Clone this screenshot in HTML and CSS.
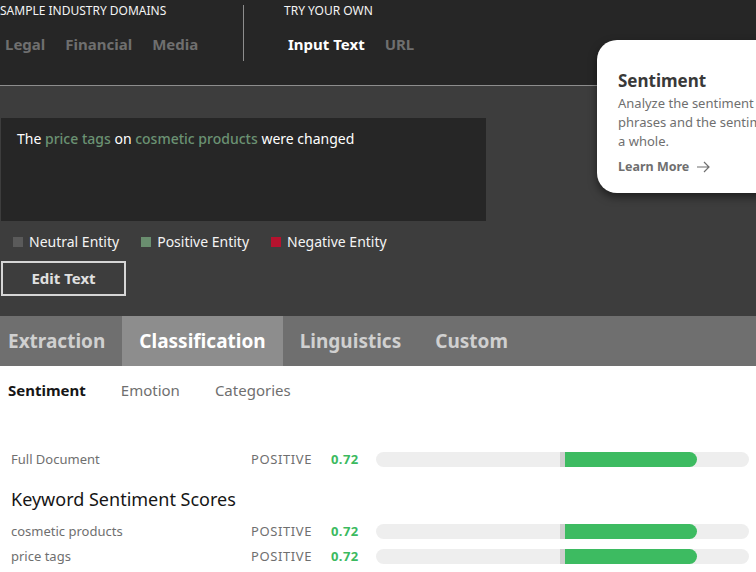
FILE: index.html
```html
<!DOCTYPE html>
<html>
<head>
<meta charset="utf-8">
<link rel="stylesheet" href="styles.css">
</head>
<body>
<div class="page">
  <header class="header">
    <div class="group group-domains">
      <div class="group-label">SAMPLE INDUSTRY DOMAINS</div>
      <div class="links">
        <span class="link">Legal</span>
        <span class="link">Financial</span>
        <span class="link">Media</span>
      </div>
    </div>
    <div class="divider"></div>
    <div class="group group-own">
      <div class="group-label">TRY YOUR OWN</div>
      <div class="links">
        <span class="link active">Input Text</span>
        <span class="link">URL</span>
      </div>
    </div>
  </header>

  <section class="input-area">
    <div class="text-box">The <span class="pos">price tags</span> on <span class="pos">cosmetic products</span> were changed</div>
    <div class="legend">
      <span class="legend-item"><span class="swatch neutral"></span>Neutral Entity</span>
      <span class="legend-item"><span class="swatch positive"></span>Positive Entity</span>
      <span class="legend-item"><span class="swatch negative"></span>Negative Entity</span>
    </div>
    <button class="edit-btn">Edit Text</button>
  </section>

  <nav class="tabs">
    <span class="tab">Extraction</span>
    <span class="tab active">Classification</span>
    <span class="tab">Linguistics</span>
    <span class="tab">Custom</span>
  </nav>

  <section class="results">
    <div class="subtabs">
      <span class="subtab active">Sentiment</span>
      <span class="subtab">Emotion</span>
      <span class="subtab">Categories</span>
    </div>

    <div class="row row-doc">
      <span class="row-label">Full Document</span>
      <span class="row-sent">POSITIVE</span>
      <span class="row-score">0.72</span>
      <div class="bar"><div class="bar-left"></div><div class="bar-mid"></div><div class="bar-right"><div class="bar-fill" style="width:72%"></div></div></div>
    </div>

    <h2 class="kw-title">Keyword Sentiment Scores</h2>

    <div class="row">
      <span class="row-label">cosmetic products</span>
      <span class="row-sent">POSITIVE</span>
      <span class="row-score">0.72</span>
      <div class="bar"><div class="bar-left"></div><div class="bar-mid"></div><div class="bar-right"><div class="bar-fill" style="width:72%"></div></div></div>
    </div>
    <div class="row">
      <span class="row-label">price tags</span>
      <span class="row-sent">POSITIVE</span>
      <span class="row-score">0.72</span>
      <div class="bar"><div class="bar-left"></div><div class="bar-mid"></div><div class="bar-right"><div class="bar-fill" style="width:72%"></div></div></div>
    </div>
  </section>

  <div class="popup">
    <div class="popup-title">Sentiment</div>
    <p class="popup-text">Analyze the sentiment toward specific target<br>phrases and the sentiment of the document as<br>a whole.</p>
    <div class="popup-link">Learn More
      <svg class="arrow" width="13" height="12" viewBox="0 0 13 12"><path d="M0 6H12M7 1L12 6L7 11" fill="none" stroke="#6f6f6f" stroke-width="1.2"/></svg>
    </div>
  </div>
</div>
</body>
</html>
```

FILE: styles.css
```css
* { box-sizing: border-box; }
html, body { margin: 0; padding: 0; overflow: hidden; }
body {
  font-family: "Noto Sans", "Open Sans", sans-serif;
  background: #ffffff;
  width: 756px;
  height: 572px;
}
.page { position: relative; width: 756px; height: 572px; overflow: hidden; }

.header {
  height: 86px;
  background: #262626;
  border-bottom: 1px solid #8d8d8d;
  display: flex;
  align-items: flex-start;
}
.group { display: flex; flex-direction: column; }
.group-domains { width: 243px; }
.group-own { padding-left: 40px; }
.group-label {
  color: #f4f4f4;
  font-size: 12px;
  line-height: 14px;
  margin-top: 4px;
}
.links { display: flex; gap: 20px; margin-top: 17px; padding-left: 5px; }
.group-own .links { padding-left: 4px; }
.link {
  color: #6f6f6f;
  font-weight: 700;
  font-size: 15px;
  line-height: 18px;
}
.link.active { color: #ffffff; }
.divider {
  width: 1px;
  height: 56px;
  margin-top: 5px;
  background: #8d8d8d;
}

.input-area {
  background: #3d3d3d;
  height: 230px;
  padding: 32px 0 0 1px;
}
.text-box {
  width: 485px;
  height: 103px;
  background: #262626;
  color: #ffffff;
  font-size: 14px;
  line-height: 18px;
  padding: 12px 16px;
}
.pos { color: #6b9273; font-weight: 500; }
.legend {
  display: flex;
  gap: 22px;
  padding-left: 12px;
  margin-top: 12px;
  height: 18px;
  align-items: center;
}
.legend-item {
  display: flex;
  align-items: center;
  gap: 6px;
  color: #f4f4f4;
  font-size: 14px;
  line-height: 18px;
}
.swatch { width: 10px; height: 10px; display: inline-block; }
.swatch.neutral { background: #5a5a5a; }
.swatch.positive { background: #6a8e6f; }
.swatch.negative { background: #b5122e; }
.edit-btn {
  display: block;
  margin-top: 10px;
  width: 125px;
  height: 35px;
  background: transparent;
  border: 2px solid #d6d6d6;
  color: #e0e0e0;
  font-family: inherit;
  font-weight: 700;
  font-size: 15px;
  line-height: 28px;
  padding: 0 0 2px 0;
}

.tabs {
  height: 50px;
  background: #6f6f6f;
  display: flex;
}
.tab {
  display: flex;
  align-items: center;
  padding: 0 17px;
  color: #d0d0d0;
  font-weight: 700;
  font-size: 19px;
}
.tab:first-child { padding-left: 8px; }
.tab.active { background: #8d8d8d; color: #ffffff; }

.results { padding: 0 7px 0 0; }
.subtabs {
  display: flex;
  gap: 35px;
  padding-left: 8px;
  margin-top: 14px;
  height: 20px;
  align-items: center;
}
.subtab { color: #6f6f6f; font-size: 15px; line-height: 20px; }
.subtab.active { color: #161616; font-weight: 700; }

.row {
  display: flex;
  align-items: center;
  height: 20px;
  padding-left: 11px;
  margin-top: 5px;
}
.row-doc { margin-top: 49px; }
.row-label { width: 240px; color: #6f6f6f; font-size: 13px; }
.row-sent { width: 80px; color: #6f6f6f; font-size: 13px; letter-spacing: 0.6px; }
.row-score { width: 45px; color: #3cba5f; font-size: 13px; font-weight: 700; letter-spacing: 0.4px; }
.bar {
  flex: 1;
  height: 15px;
  border-radius: 8px;
  background: #eeeeee;
  display: flex;
  overflow: hidden;
}
.bar-left { width: 184px; }
.bar-mid { width: 5px; background: #cfcfcf; }
.bar-right { flex: 1; display: flex; }
.bar-fill { background: #3dbb61; border-radius: 0 8px 8px 0; height: 100%; }

.kw-title {
  margin: 19px 0 0 11px;
  font-weight: 400;
  font-size: 18px;
  line-height: 22px;
  color: #161616;
}
.kw-title + .row { margin-top: 11px; }

.popup {
  position: absolute;
  left: 597px;
  top: 40px;
  width: 330px;
  height: 153px;
  background: #ffffff;
  border-radius: 20px;
  box-shadow: 0 4px 8px rgba(0,0,0,0.5);
  padding: 30px 21px 0 21px;
}
.popup-title {
  color: #393939;
  font-size: 17px;
  font-weight: 700;
  line-height: 22px;
}
.popup-text {
  margin: 2px 0 0 0;
  color: #6f6f6f;
  font-size: 13px;
  line-height: 19px;
}
.popup-link {
  margin-top: 7px;
  color: #6f6f6f;
  font-weight: 700;
  font-size: 12.5px;
  line-height: 18px;
  display: flex;
  align-items: center;
  gap: 8px;
}
.arrow { display: block; }
```
